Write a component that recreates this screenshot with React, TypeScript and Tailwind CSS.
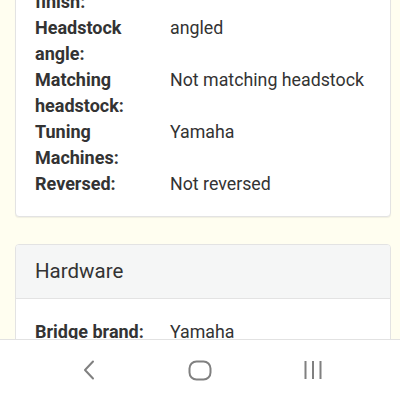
const rows: [string, string][] = [
  ["Headstock finish:", "Glossy"],
  ["Headstock angle:", "angled"],
  ["Matching headstock:", "Not matching headstock"],
  ["Tuning Machines:", "Yamaha"],
  ["Reversed:", "Not reversed"],
];

function SpecRow({ label, value }: { label: string; value: string }) {
  return (
    <div className="flex text-[18px] leading-[26px] text-[#333]">
      <div className="w-[135px] shrink-0 pr-2 font-bold">{label}</div>
      <div className="flex-1 text-[17.8px]">{value}</div>
    </div>
  );
}

function NavBar() {
  return (
    <div className="absolute inset-x-0 bottom-0 flex h-[61px] items-center justify-between border-t border-[#e2e2e2] bg-white pl-[82px] pr-[77px] text-[#808080]">
      <svg width="14" height="20" viewBox="0 0 14 20" fill="none" stroke="currentColor" strokeWidth="2" strokeLinecap="round" strokeLinejoin="round">
        <path d="M11 1.5 3 10l8 8.5" />
      </svg>
      <svg width="24" height="21" viewBox="0 0 24 21" fill="none" stroke="currentColor" strokeWidth="2">
        <rect x="1.5" y="1.5" width="21" height="18" rx="7" />
      </svg>
      <svg width="20" height="20" viewBox="0 0 20 20" fill="none" stroke="currentColor" strokeWidth="2">
        <path d="M2.5 1v18M10 1v18M17.5 1v18" />
      </svg>
    </div>
  );
}

export default function App() {
  return (
    <div className="relative h-[400px] w-[400px] overflow-hidden bg-[#fffef0] font-['Roboto','Liberation_Sans',sans-serif]">
      <div className="ml-[15px] w-[376px]">
        <div className="-mt-[57px] rounded border border-[#e3e3e3] bg-white px-[19px] pb-[19px] pt-[19px] shadow-[0_1px_1px_rgba(0,0,0,0.06)]">
          {rows.map(([label, value]) => (
            <SpecRow key={label} label={label} value={value} />
          ))}
        </div>
        <div className="mt-[27px] overflow-hidden rounded border border-[#e3e3e3] bg-white">
          <div className="flex h-[54px] items-center border-b border-[#e3e3e3] bg-[#f5f6f6] px-[19px] text-[20.5px] text-[#333]">Hardware</div>
          <div className="px-[19px] pb-[20px] pt-[20px]">
            <SpecRow label="Bridge brand:" value="Yamaha" />
            <SpecRow label="Bridge type:" value="Tremolo" />
          </div>
        </div>
      </div>
      <NavBar />
    </div>
  );
}
